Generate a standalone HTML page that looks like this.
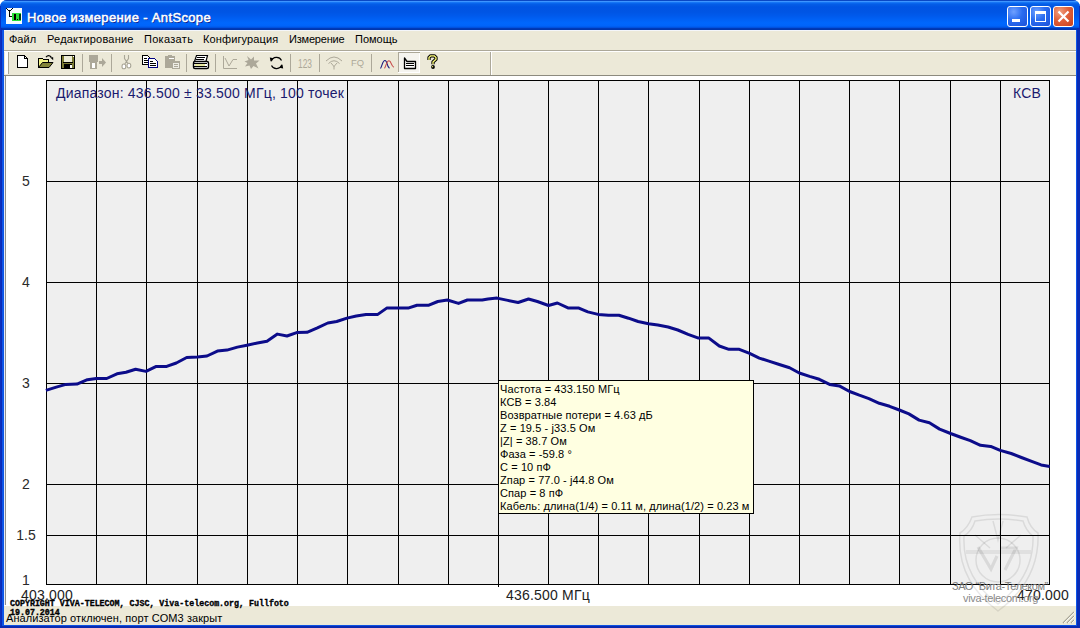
<!DOCTYPE html>
<html><head><meta charset="utf-8">
<style>
*{margin:0;padding:0;box-sizing:border-box}
html,body{width:1080px;height:628px;overflow:hidden;background:#fff;font-family:"Liberation Sans",sans-serif}
.abs{position:absolute}
#win{position:absolute;left:0;top:0;width:1080px;height:628px;background:#0053e1;border-radius:7px 7px 0 0;overflow:hidden}
#title{position:absolute;left:0;top:0;width:1080px;height:30px;
 background:linear-gradient(to bottom,#0a48c4 0px,#0a48c4 1px,#3d95ff 1px,#3d95ff 2px,#2280f8 2px,#0a6af0 3px,#045ce6 4.5px,#0054e3 7px,#0055e4 12px,#005aec 16px,#0062f6 20px,#0067fd 23px,#0064fa 26px,#0052e0 27.5px,#003ab8 28.5px,#0034a8 30px)}
#ttext{position:absolute;left:27px;top:10px;font-weight:normal;font-size:13px;color:#fff;-webkit-text-stroke:0.5px #fff;text-shadow:1px 1px 0 #0a1e8a;white-space:nowrap;letter-spacing:0.35px}
.tbtn{position:absolute;top:6px;width:21px;height:21px;border:1px solid #fff;border-radius:3px;background:radial-gradient(circle at 30% 25%,#6fa0ff 0,#2a6cf0 45%,#1c50d8 100%)}
#menu{position:absolute;left:4px;top:30px;width:1072px;height:21px;background:#ece9d8;border-bottom:1px solid #aca899;border-top:1px solid #f4f6fa}
#menu span{position:absolute;top:2px;font-size:11px;color:#000;white-space:nowrap}
#tbar{position:absolute;left:4px;top:51px;width:1072px;height:25px;background:#ece9d8;border-top:1px solid #fff;border-bottom:1px solid #8c8a7e}
#client{position:absolute;left:4px;top:76px;width:1072px;height:530px;background:#fff;border-left:1px solid #e4ecf8}
#client:after{content:"";position:absolute;left:0;top:0;width:1px;height:530px;background:#8e8e8e}
#status{position:absolute;left:4px;top:605px;width:1072px;height:20px;background:#ece9d8;border-top:1px solid #fff}
#status span{position:absolute;left:2px;top:6px;font-size:11px;letter-spacing:0.08px;color:#000;white-space:nowrap}
svg text{font-family:"Liberation Sans",sans-serif}
svg text.mono{font-family:"Liberation Mono",monospace}
#tip{position:absolute;left:498px;top:380px;width:256px;height:134px;background:#ffffe1;border:1px solid #000;padding:2px 0 0 1px;font-size:11px;line-height:13px;color:#000;white-space:nowrap;letter-spacing:0.1px}
</style></head><body>
<div id="win">
 <div id="title">
  <svg class="abs" style="left:6px;top:8px" width="16" height="16" viewBox="0 0 16 16" shape-rendering="crispEdges">
   <rect x="0" y="0" width="16" height="16" fill="#f4fbff"/>
   <rect x="6" y="5" width="9" height="8" fill="#28e03a"/>
   <rect x="8" y="6" width="2" height="6" fill="#000"/>
   <rect x="11" y="11" width="1" height="1" fill="#000"/>
   <rect x="13" y="6" width="2" height="6" fill="#003a10"/>
   <rect x="3" y="2" width="1" height="7" fill="#000"/>
   <rect x="3" y="8" width="3" height="1" fill="#000"/>
   <rect x="0" y="0" width="1" height="1" fill="#000"/><rect x="1" y="1" width="1" height="1" fill="#000"/><rect x="2" y="2" width="1" height="1" fill="#000"/>
   <rect x="6" y="0" width="1" height="1" fill="#000"/><rect x="5" y="1" width="1" height="1" fill="#000"/><rect x="4" y="2" width="1" height="1" fill="#000"/>
  </svg>
  <div id="ttext">Новое измерение - AntScope</div>
  <div class="tbtn" style="left:1007px"><div class="abs" style="left:4px;top:12px;width:8px;height:3px;background:#fff"></div></div>
  <div class="tbtn" style="left:1030px"><div class="abs" style="left:4px;top:4px;width:11px;height:11px;border:1px solid #fff;border-top-width:3px"></div></div>
  <div class="tbtn" style="left:1053px;background:radial-gradient(circle at 30% 25%,#f0a080 0,#e0603a 45%,#c8401c 100%)">
   <svg class="abs" style="left:0;top:0" width="19" height="19"><path d="M4.5 4.5 L14.5 14.5 M14.5 4.5 L4.5 14.5" stroke="#fff" stroke-width="2.2"/></svg>
  </div>
 </div>
 <div id="menu">
  <span style="left:5px">Файл</span>
  <span style="left:43px;letter-spacing:0.2px">Редактирование</span>
  <span style="left:140px;letter-spacing:0.3px">Показать</span>
  <span style="left:199px;letter-spacing:0.12px">Конфигурация</span>
  <span style="left:285px;letter-spacing:-0.2px">Измерение</span>
  <span style="left:351px">Помощь</span>
 </div>
 <div id="tbar"></div>
 <svg class="abs" style="left:0;top:0" width="500" height="76" shape-rendering="crispEdges">
  <rect x="5" y="52" width="3" height="22" fill="#fff"/>
  <rect x="8" y="52" width="1" height="22" fill="#a8a596"/>
  <g fill="#aca899">
   <rect x="82" y="54" width="1" height="18"/><rect x="111" y="54" width="1" height="18"/>
   <rect x="186" y="54" width="1" height="18"/><rect x="215" y="54" width="1" height="18"/>
   <rect x="290" y="54" width="1" height="18"/><rect x="319" y="54" width="1" height="18"/>
   <rect x="371" y="54" width="1" height="18"/>
   <rect x="490" y="52" width="1" height="23"/>
  </g>
  <rect x="491" y="52" width="1" height="23" fill="#fff"/>
  <!-- new -->
  <path d="M17.5 55.5H24.5L27.5 58.5V67.5H17.5Z" fill="#fff" stroke="#000"/>
  <path d="M24.5 55.5V58.5H27.5" fill="none" stroke="#000"/>
  <!-- open -->
  <rect x="39" y="59" width="10" height="8" fill="#f2f288"/>
  <path d="M38.5 67.5V58.5H42.5L43.5 59.5H48.5V62" fill="none" stroke="#000"/>
  <path d="M38.5 67.5L42.5 62.5H53L49 67.5Z" fill="#838338" stroke="#000" shape-rendering="auto"/>
  <path d="M46 57.2Q48.5 54.2 51.2 57" fill="none" stroke="#000" stroke-width="1.2" shape-rendering="auto"/>
  <path d="M50 57.2H53.2V60.2Z" fill="#000" shape-rendering="auto"/>
  <!-- save -->
  <rect x="61" y="55" width="14" height="14" fill="#000"/>
  <rect x="62" y="56" width="12" height="12" fill="#7c7c34"/>
  <rect x="64" y="56" width="8" height="6" fill="#ecebd6"/>
  <rect x="63" y="62" width="10" height="1" fill="#000"/>
  <rect x="64" y="64" width="8" height="4" fill="#000"/>
  <rect x="70" y="65" width="2" height="3" fill="#fff"/>
  <rect x="73" y="56" width="1" height="1" fill="#fff"/>
  <!-- export disabled -->
  <g fill="#aca899">
   <rect x="89" y="55" width="9" height="7"/>
   <rect x="90" y="62" width="7" height="7"/>
   <rect x="99" y="61" width="3" height="3"/>
   <path d="M102 58L106 62.5L102 67Z" shape-rendering="auto"/>
  </g>
  <rect x="92" y="63" width="3" height="5" fill="#fff"/>
  <!-- scissors disabled -->
  <g fill="none" stroke="#a9a697" stroke-width="1.1" shape-rendering="auto">
   <path d="M124.5 55V58.5L126.5 61.5L128.5 58.5V55"/>
   <path d="M126.5 61.5L124.8 64M126.5 61.5L128 63.5"/>
   <ellipse cx="123.9" cy="66.4" rx="1.9" ry="2.4" fill="#fff"/>
   <ellipse cx="128.9" cy="65.6" rx="1.9" ry="2.4" fill="#fff"/>
  </g>
  <!-- copy -->
  <path d="M142.5 55.5H147.5L149.5 57.5V64.5H142.5Z" fill="#fff" stroke="#000" stroke-width="1.4"/>
  <g fill="#000"><rect x="144" y="58" width="3" height="1"/><rect x="144" y="60" width="4" height="1"/><rect x="144" y="62" width="4" height="1"/></g>
  <path d="M148.5 58.5H154.5L157.5 61.5V67.5H148.5Z" fill="#fff" stroke="#000080" stroke-width="1.4"/>
  <g fill="#000"><rect x="150" y="61" width="3" height="1"/><rect x="150" y="63" width="6" height="1"/><rect x="150" y="65" width="6" height="1"/></g>
  <!-- paste disabled -->
  <rect x="165" y="56" width="10" height="12" rx="1" fill="#aca899"/>
  <rect x="168" y="55" width="4" height="2" fill="#aca899"/>
  <rect x="169" y="58" width="5" height="1" fill="#fff"/>
  <rect x="172" y="61" width="8" height="8" fill="#aca899"/>
  <rect x="173" y="63" width="6" height="5" fill="#eeede5"/>
  <rect x="174" y="64" width="4" height="1" fill="#aca899"/><rect x="174" y="66" width="4" height="1" fill="#aca899"/>
  <!-- printer -->
  <path d="M196.5 55.5H207.5L206 61.5H194.5Z" fill="#fff" stroke="#000" stroke-width="1.2" shape-rendering="auto"/>
  <rect x="197" y="57" width="8" height="1" fill="#000"/><rect x="196" y="59" width="8" height="1" fill="#000"/>
  <rect x="193.5" y="61.5" width="15" height="7" rx="1.5" fill="#fff" stroke="#000" stroke-width="1.4" shape-rendering="auto"/>
  <rect x="194" y="63" width="13" height="1" fill="#000"/>
  <rect x="195" y="64" width="10" height="2" fill="#e8e8a0"/>
  <rect x="194" y="66" width="13" height="1" fill="#000"/>
  <!-- chart disabled -->
  <g fill="none" stroke="#aca899" shape-rendering="auto">
   <path d="M223.5 56V68.5H237"/>
   <path d="M225 58L229 66L233 59.5H237"/>
  </g>
  <!-- star disabled -->
  <path d="M247 56L251 59.5L254 56.5L254 60.5L259.5 60.5L256 63.5L258.5 68.5L253.5 66L251 69L249.5 65.5L245 66.5L247.5 63L244.5 61.5L248.5 60Z" fill="#aca899" shape-rendering="auto"/>
  <!-- refresh -->
  <path d="M271.3 61.2A5.5 5.5 0 0 1 281.5 60.5M281.7 64.8A5.5 5.5 0 0 1 271.5 65.5" fill="none" stroke="#000" stroke-width="1.2" shape-rendering="auto"/>
  <path d="M269.8 57.5L273.8 58.2L270.6 61.6Z M283.2 68.5L279.2 67.8L282.4 64.4Z" fill="#000" shape-rendering="auto"/>
  <!-- 123 -->
  <text x="298" y="68" font-size="12" fill="#aca899" shape-rendering="auto" textLength="14" lengthAdjust="spacingAndGlyphs">123</text>
  <!-- antenna -->
  <g fill="none" stroke="#aca899" shape-rendering="auto">
   <path d="M326 61Q334 53 342 61"/>
   <path d="M328.5 63.5Q334 58 339.5 63.5"/>
   <path d="M331 63L334 66.5L337 63M334 66V69.5"/>
  </g>
  <!-- FQ -->
  <text x="351" y="66.3" font-size="9.6" fill="#aca899" shape-rendering="auto" textLength="13" lengthAdjust="spacingAndGlyphs">FQ</text>
  <!-- curves -->
  <path d="M380.5 68.5C382 66.5 382.5 60.5 385 60.5C387.5 60.5 386.5 66.5 389.5 68.3" fill="none" stroke="#1a1a80" stroke-width="1.1" shape-rendering="auto"/>
  <path d="M384.5 68.3C386 66.5 386.5 60.8 389 60.8C391.5 60.8 391 66.5 394 67.3" fill="none" stroke="#c84a4a" stroke-width="1.1" shape-rendering="auto"/>
  <!-- pressed button -->
  <rect x="398" y="52" width="22" height="21" fill="#f5f4ef"/>
  <rect x="398" y="52" width="22" height="1" fill="#aca899"/><rect x="398" y="52" width="1" height="21" fill="#aca899"/>
  <rect x="419" y="53" width="1" height="20" fill="#fff"/><rect x="398" y="72" width="22" height="1" fill="#fff"/>
  <path d="M404.5 58V68.5H415.5V61.5H407L404.5 58Z" fill="#fff" stroke="#000" stroke-width="1.3" stroke-linejoin="round" shape-rendering="auto"/>
  <rect x="406" y="63" width="8" height="1" fill="#000"/><rect x="406" y="65" width="8" height="1" fill="#000"/>
  <!-- help -->
  <path d="M429 60V57.5L430.8 55.8H434.2L436 57.5V59.2L433 62V64.2" fill="none" stroke="#000" stroke-width="3.3" stroke-linejoin="round" shape-rendering="auto"/>
  <path d="M429 60V57.5L430.8 55.8H434.2L436 57.5V59.2L433 62V64.2" fill="none" stroke="#ffff78" stroke-width="1.3" stroke-linejoin="round" shape-rendering="auto"/>
  <circle cx="433" cy="67" r="1.9" fill="#000" shape-rendering="auto"/>
  <circle cx="432.6" cy="66.7" r="0.6" fill="#ffff78" shape-rendering="auto"/>
 </svg>
 <div id="client">
 </div>
 <svg class="abs" style="left:0;top:0" width="1080" height="628">
  <rect x="46.5" y="80.5" width="1003" height="504" fill="#efefef" stroke="#000" stroke-width="1" shape-rendering="crispEdges"/>
  <g stroke="#000" stroke-width="1" shape-rendering="crispEdges"><line x1="96.5" y1="80" x2="96.5" y2="585"/><line x1="146.5" y1="80" x2="146.5" y2="585"/><line x1="197.5" y1="80" x2="197.5" y2="585"/><line x1="247.5" y1="80" x2="247.5" y2="585"/><line x1="297.5" y1="80" x2="297.5" y2="585"/><line x1="347.5" y1="80" x2="347.5" y2="585"/><line x1="398.5" y1="80" x2="398.5" y2="585"/><line x1="448.5" y1="80" x2="448.5" y2="585"/><line x1="498.5" y1="80" x2="498.5" y2="585"/><line x1="548.5" y1="80" x2="548.5" y2="585"/><line x1="598.5" y1="80" x2="598.5" y2="585"/><line x1="648.5" y1="80" x2="648.5" y2="585"/><line x1="699.5" y1="80" x2="699.5" y2="585"/><line x1="749.5" y1="80" x2="749.5" y2="585"/><line x1="799.5" y1="80" x2="799.5" y2="585"/><line x1="849.5" y1="80" x2="849.5" y2="585"/><line x1="899.5" y1="80" x2="899.5" y2="585"/><line x1="950.5" y1="80" x2="950.5" y2="585"/><line x1="1000.5" y1="80" x2="1000.5" y2="585"/><line x1="46" y1="181.5" x2="1050" y2="181.5"/><line x1="46" y1="282.5" x2="1050" y2="282.5"/><line x1="46" y1="383.5" x2="1050" y2="383.5"/><line x1="46" y1="484.5" x2="1050" y2="484.5"/><line x1="46" y1="535.5" x2="1050" y2="535.5"/><line x1="498.5" y1="584" x2="498.5" y2="587"/></g>
  <polyline points="45.9,390.4 56.3,387.1 65.9,384.4 77.0,384.1 87.4,379.7 96.3,378.5 106.7,378.5 117.0,373.8 126.0,372.3 135.6,369.3 146.0,371.4 156.3,366.4 166.7,366.4 176.3,363.0 186.7,357.5 197.4,357.0 207.0,356.0 217.4,351.1 227.0,350.1 237.4,347.1 247.0,345.2 257.4,343.0 267.0,341.2 277.4,334.1 287.0,336.0 296.7,332.6 307.0,332.3 317.4,327.9 327.8,323.0 336.7,321.5 347.0,318.1 356.3,316.0 366.0,314.4 377.8,314.4 386.7,308.1 397.8,308.1 408.1,308.1 417.0,305.2 428.9,305.2 437.8,301.5 447.4,300.0 458.5,303.4 467.4,300.0 482.2,300.0 488.0,299.0 497.0,298.1 507.8,300.4 518.1,302.5 528.5,299.0 537.4,301.5 548.5,305.5 557.4,303.0 568.5,308.1 578.9,308.1 587.8,311.9 598.1,314.4 608.5,315.3 618.9,315.3 628.5,318.2 638.1,321.5 648.5,323.7 657.8,325.1 668.1,327.0 677.8,330.0 688.1,334.4 698.5,338.1 708.9,338.1 719.3,346.0 728.9,349.3 739.3,349.3 749.6,353.3 759.3,358.1 768.9,361.1 779.3,364.5 789.6,367.8 799.3,373.0 809.6,376.4 819.3,379.3 829.6,384.4 839.3,385.9 849.6,391.5 859.3,395.2 868.9,398.6 879.3,403.3 889.6,406.3 899.3,410.0 908.9,413.9 919.1,420.1 929.4,422.8 939.6,429.1 950.6,433.5 960.0,437.0 970.3,440.6 980.5,445.3 990.7,446.4 1000.2,450.4 1011.2,453.5 1021.4,457.5 1031.7,461.4 1041.1,464.9 1049.8,466.4" fill="none" stroke="#0c0c8a" stroke-width="3" stroke-linejoin="round"/>
  <g fill="#2a2a2a" font-size="14" text-anchor="middle">
   <text x="26" y="186">5</text>
   <text x="26" y="287">4</text>
   <text x="26" y="388">3</text>
   <text x="26" y="489">2</text>
   <text x="26" y="540">1.5</text>
   <text x="26" y="585">1</text>
  </g>
  <text x="56" y="98" font-size="14" fill="#1a1a6e" letter-spacing="0.2">Диапазон: 436.500 ± 33.500 МГц, 100 точек</text>
  <text x="1013" y="98" font-size="14" fill="#1a1a6e" letter-spacing="0.2">КСВ</text>
  <text x="21" y="600" font-size="14" fill="#222" letter-spacing="0.2">403.000</text>
  <text x="506" y="600" font-size="14" fill="#222" letter-spacing="0.2">436.500 МГц</text>
  <text x="1017" y="600" font-size="14" fill="#222" letter-spacing="0.2">470.000</text>
 </svg>
 <div id="tip">Частота = 433.150 МГц<br>КСВ = 3.84<br>Возвратные потери = 4.63 дБ<br>Z = 19.5 - j33.5 Ом<br>|Z| = 38.7 Ом<br>Фаза = -59.8 °<br>C = 10 пФ<br>Zпар = 77.0 - j44.8 Ом<br>Cпар = 8 пФ<br>Кабель: длина(1/4) = 0.11 м, длина(1/2) = 0.23 м</div>
 <div id="status"><span>Анализатор отключен, порт COM3 закрыт</span></div>

 <svg class="abs" style="left:0;top:0" width="1080" height="628">
  <g fill="none" stroke="#000" stroke-opacity="0.085" stroke-width="1.5">
   <path d="M972 517 Q998 512 1027 517 Q1030 528 1038 533 Q1040 580 998 611 Q956 580 960 533 Q968 528 972 517Z"/>
   <path d="M975 521 Q998 517 1023 521 Q1026 531 1033 536 Q1034 577 998 604 Q962 577 964 536 Q972 531 975 521Z"/>
   <circle cx="998" cy="560" r="22"/>
   <path d="M993 521L998 540L1003 521M975 535L990 548M1021 535L1006 548"/>
   <path d="M966 552H1031" stroke-width="4" stroke-opacity="0.06"/>
   <path d="M978 547L991 569L997 556M1000 548H1016L1005 570" stroke-width="3.2" stroke-opacity="0.09"/>
  </g>
  <text x="952" y="590" font-size="11" fill="#7d7d7d" letter-spacing="-0.45">ЗАО “Вита-Телеком”</text>
  <text x="963" y="601.5" font-size="11" fill="#8a8a8a" letter-spacing="-0.35">viva-telecom.org</text>
 </svg>
 <svg class="abs" style="left:0;top:0" width="1080" height="628">
  <g font-family="Liberation Mono" font-weight="bold" font-size="8.3" fill="#000" stroke="#000" stroke-width="0.35">
   <text class="mono" x="10" y="605.5">COPYRIGHT VIVA-TELECOM, CJSC, Viva-telecom.org, Fullfoto</text>
   <text class="mono" x="10" y="615">19.07.2014</text>
  </g>
  <g stroke="#a8a595" stroke-width="1.3">
   <path d="M1063 623L1074 612M1067 623L1074 616M1071 623L1074 620"/>
  </g>
  <g stroke="#fff" stroke-width="0.8">
   <path d="M1064 623L1075 612M1068 623L1075 616M1072 623L1075 620"/>
  </g>
 </svg>
 <div class="abs" style="left:0;top:6px;width:1px;height:622px;background:#0a30c0"></div><div class="abs" style="left:1px;top:28px;width:1px;height:600px;background:#0a2ab8"></div>
 <div class="abs" style="left:2px;top:30px;width:2px;height:598px;background:#0d55e8"></div>
 <div class="abs" style="left:1076px;top:30px;width:1px;height:598px;background:#0d55e8"></div>
 <div class="abs" style="left:1079px;top:6px;width:1px;height:22px;background:#0a30c0"></div><div class="abs" style="left:1077px;top:28px;width:3px;height:600px;background:#0a2cb4"></div>
 <div class="abs" style="left:2px;top:625px;width:1075px;height:1px;background:#0d52e2"></div>
 <div class="abs" style="left:0;top:626px;width:1080px;height:2px;background:#0a2ab0"></div>
</div>
</body></html>
